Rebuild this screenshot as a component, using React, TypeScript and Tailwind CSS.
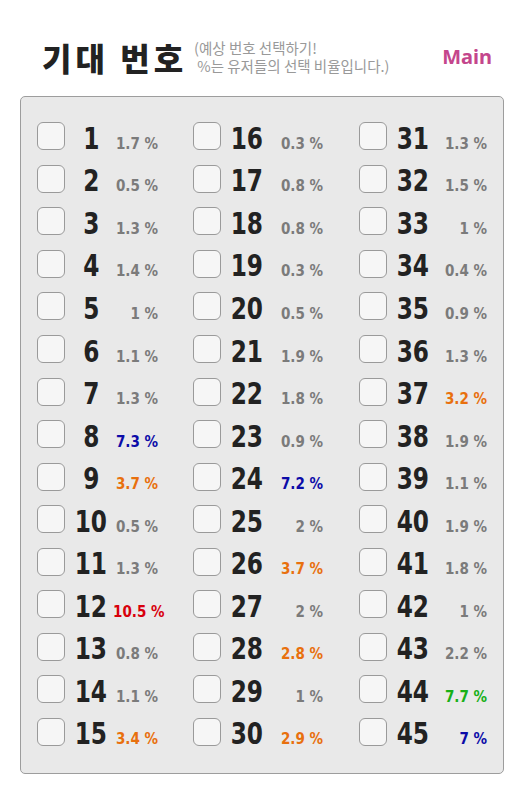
const numFont = "[font-family:'DejaVu_Sans_Condensed','DejaVu_Sans',sans-serif] font-stretch-condensed";

const GRAY = "text-[#7b7b7b]";
const BLUE = "text-[#0c0ca8]";
const ORANGE = "text-[#e8700e]";
const RED = "text-[#d8000c]";
const GREEN = "text-[#17b017]";

type Item = { n: number; pct: string; color: string };

const columns: Item[][] = [
  [
    { n: 1, pct: "1.7", color: GRAY },
    { n: 2, pct: "0.5", color: GRAY },
    { n: 3, pct: "1.3", color: GRAY },
    { n: 4, pct: "1.4", color: GRAY },
    { n: 5, pct: "1", color: GRAY },
    { n: 6, pct: "1.1", color: GRAY },
    { n: 7, pct: "1.3", color: GRAY },
    { n: 8, pct: "7.3", color: BLUE },
    { n: 9, pct: "3.7", color: ORANGE },
    { n: 10, pct: "0.5", color: GRAY },
    { n: 11, pct: "1.3", color: GRAY },
    { n: 12, pct: "10.5", color: RED },
    { n: 13, pct: "0.8", color: GRAY },
    { n: 14, pct: "1.1", color: GRAY },
    { n: 15, pct: "3.4", color: ORANGE },
  ],
  [
    { n: 16, pct: "0.3", color: GRAY },
    { n: 17, pct: "0.8", color: GRAY },
    { n: 18, pct: "0.8", color: GRAY },
    { n: 19, pct: "0.3", color: GRAY },
    { n: 20, pct: "0.5", color: GRAY },
    { n: 21, pct: "1.9", color: GRAY },
    { n: 22, pct: "1.8", color: GRAY },
    { n: 23, pct: "0.9", color: GRAY },
    { n: 24, pct: "7.2", color: BLUE },
    { n: 25, pct: "2", color: GRAY },
    { n: 26, pct: "3.7", color: ORANGE },
    { n: 27, pct: "2", color: GRAY },
    { n: 28, pct: "2.8", color: ORANGE },
    { n: 29, pct: "1", color: GRAY },
    { n: 30, pct: "2.9", color: ORANGE },
  ],
  [
    { n: 31, pct: "1.3", color: GRAY },
    { n: 32, pct: "1.5", color: GRAY },
    { n: 33, pct: "1", color: GRAY },
    { n: 34, pct: "0.4", color: GRAY },
    { n: 35, pct: "0.9", color: GRAY },
    { n: 36, pct: "1.3", color: GRAY },
    { n: 37, pct: "3.2", color: ORANGE },
    { n: 38, pct: "1.9", color: GRAY },
    { n: 39, pct: "1.1", color: GRAY },
    { n: 40, pct: "1.9", color: GRAY },
    { n: 41, pct: "1.8", color: GRAY },
    { n: 42, pct: "1", color: GRAY },
    { n: 43, pct: "2.2", color: GRAY },
    { n: 44, pct: "7.7", color: GREEN },
    { n: 45, pct: "7", color: BLUE },
  ],
];

const pctWidths = ["w-[45px]", "w-[54px]", "w-[52px]"];

function Row({ item, pctWidth }: { item: Item; pctWidth: string }) {
  return (
    <label className="flex items-center h-[42.55px]">
      <input type="checkbox" className="sr-only" />
      <span className="w-7 h-7 shrink-0 rounded-[6px] border border-[#9a9a9a] bg-[#f6f6f6]" />
      <div className="flex items-baseline translate-y-[3px] whitespace-nowrap">
        <span className="ml-[4px] w-[44px] shrink-0 text-center">
          <span className={`${numFont} inline-block scale-x-[0.86] text-[30px] leading-none font-bold text-[#222]`}>
            {item.n}
          </span>
        </span>
        <span className={`${numFont} ${pctWidth} ${item.color} shrink-0 text-right text-[15px] leading-none font-bold`}>
          {item.pct} %
        </span>
      </div>
    </label>
  );
}

export default function App() {
  return (
    <div className="w-[524px] h-[800px] bg-white [font-family:'Noto_Sans','Noto_Sans_CJK_KR',sans-serif]">
      {/* Header */}
      <div className="flex items-center h-[96px] pl-[42px] pr-[32px] pt-[30px] pb-[12px]">
        <h1 className="[font-family:'Noto_Sans_CJK_KR',sans-serif] text-[32px] font-black leading-none text-[#222] tracking-[4px]">
          기대 번호
        </h1>
        <div className="ml-[7px] [font-family:'Noto_Sans_CJK_KR',sans-serif] text-[14.5px] leading-[18px] text-[#999] whitespace-pre">
          <div>(예상 번호 선택하기!</div>
          <div> %는 유저들의 선택 비율입니다.)</div>
        </div>
        <div className="ml-auto text-[20px] font-bold text-[#c4468c] leading-none">Main</div>
      </div>

      {/* Number panel */}
      <div className="mx-[20px] w-[484px] h-[678px] rounded-[5px] border border-[#9d9d9d] bg-[#e9e9e9] pl-[16px] pt-[18px]">
        <div className="grid grid-cols-[156px_166px_1fr]">
          {columns.map((col, ci) => (
            <div key={ci} className="flex flex-col">
              {col.map((item) => (
                <Row key={item.n} item={item} pctWidth={pctWidths[ci]} />
              ))}
            </div>
          ))}
        </div>
      </div>
    </div>
  );
}
